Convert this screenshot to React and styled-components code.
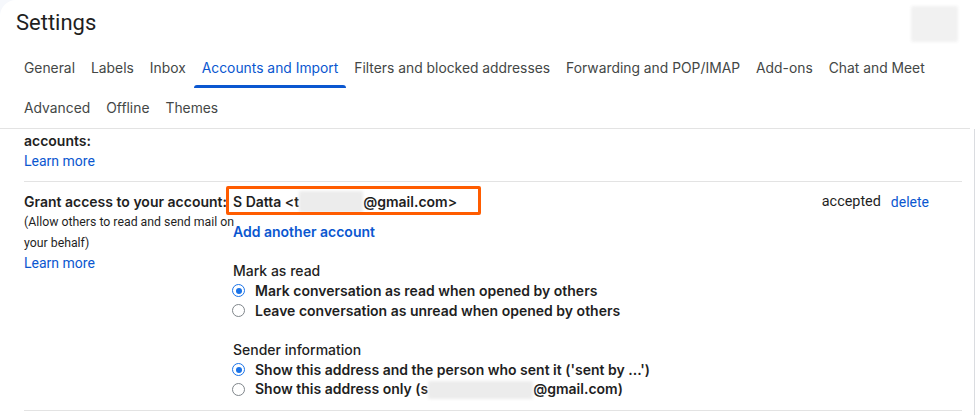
import React from "react";
import styled, { createGlobalStyle } from "styled-components";

const Global = createGlobalStyle`
  html, body { margin: 0; padding: 0; background: #f6f8fc; }
  body { font-family: Roboto, "Noto Sans", Arial, sans-serif; color: #1f1f1f; }
  * { box-sizing: border-box; }
`;

const Card = styled.div`
  width: 975px;
  height: 415px;
  background: #fff;
  border-top-left-radius: 16px;
  overflow: hidden;
  display: flex;
  flex-direction: column;
`;

const Header = styled.div`
  height: 48px;
  display: flex;
  align-items: center;
  justify-content: space-between;
  padding: 0 17px 0 16px;
`;

const Title = styled.h1`
  margin: 0;
  font-size: 22px;
  font-weight: 400;
  color: #1f1f1f;
  line-height: 28px;
  padding-bottom: 2px;
`;

const Blur = styled.span`
  display: inline-block;
  width: ${(p) => p.w}px;
  height: ${(p) => p.h}px;
  background: ${(p) => p.bg || "#ececec"};
  filter: blur(1.5px);
  vertical-align: middle;
  border-radius: 2px;
`;

const TabsArea = styled.nav`
  padding-left: 16px;
  border-bottom: 1px solid #e3e3e3;
  margin-right: 5px;
`;

const TabRow = styled.div`
  display: flex;
  height: 40px;
`;

const Tab = styled.a`
  position: relative;
  display: flex;
  align-items: center;
  padding: 0 8px 1px;
  font-family: Inter, Roboto, sans-serif;
  font-size: 13.85px;
  color: ${(p) => (p.active ? "#0b57d0" : "#444746")};
  white-space: nowrap;
  cursor: pointer;
  &::after {
    content: "";
    display: ${(p) => (p.active ? "block" : "none")};
    position: absolute;
    left: 0;
    right: 0;
    bottom: 0;
    height: 3px;
    background: #0b57d0;
    border-radius: 3px 3px 0 0;
  }
`;

const Scroll = styled.div`
  flex: 1;
  border-right: 1px solid #dadce0;
  padding: 2px 12px 0 24px;
`;

const Section = styled.div`
  display: grid;
  grid-template-columns: 209px 1fr;
  padding: ${(p) => (p.first ? "0" : "10px")} 0 10px;
  border-bottom: 1px solid #e3e3e3;
`;

const LabelCol = styled.div`
  display: flex;
  flex-direction: column;
  white-space: nowrap;
`;

const Bold = styled.div`
  font-family: Inter, Roboto, sans-serif;
  font-size: 14px;
  font-weight: 600;
  line-height: 20px;
  color: #1f1f1f;
`;

const Sub = styled.div`
  font-size: 12.3px;
  line-height: 20.5px;
  color: #1f1f1f;
`;

const Link = styled.a`
  font-family: ${(p) => (p.bold ? "Inter, Roboto, sans-serif" : "Roboto, sans-serif")};
  font-size: 14px;
  line-height: 20px;
  color: #0b57d0;
  font-weight: ${(p) => (p.bold ? 600 : 400)};
  cursor: pointer;
`;

const ValueCol = styled.div`
  display: flex;
  flex-direction: column;
`;

const AccountRow = styled.div`
  display: flex;
  align-items: center;
  height: 20px;
`;

const AccountName = styled.div`
  position: relative;
  font-family: Inter, Roboto, sans-serif;
  font-size: 14px;
  font-weight: 600;
  line-height: 20px;
  white-space: nowrap;
  display: flex;
  align-items: center;
`;

const Highlight = styled.span`
  position: absolute;
  left: -7px;
  top: -5px;
  width: 255px;
  height: 29px;
  border: 3px solid #ff5c00;
  border-radius: 2px;
  pointer-events: none;
`;

const Status = styled.div`
  margin-left: auto;
  margin-right: 33px;
  display: flex;
  gap: 10px;
  font-size: 14.4px;
  line-height: 20px;
`;

const Group = styled.div`
  margin-top: ${(p) => p.mt}px;
  display: flex;
  flex-direction: column;
`;

const GroupTitle = styled.div`
  font-family: Inter, Roboto, sans-serif;
  font-size: 14px;
  font-weight: 500;
  line-height: 20px;
  color: #1f1f1f;
`;

const Option = styled.label`
  display: flex;
  align-items: center;
  gap: 10px;
  height: 20px;
  padding-bottom: 1px;
  font-family: Inter, Roboto, sans-serif;
  font-size: 14px;
  font-weight: 600;
  color: #1f1f1f;
  white-space: nowrap;
`;

const Radio = styled.span`
  width: 13px;
  height: 13px;
  border-radius: 50%;
  border: 1.5px solid ${(p) => (p.checked ? "#1a73e8" : "#80868b")};
  display: flex;
  align-items: center;
  justify-content: center;
  margin-left: -1px;
  &::after {
    content: "";
    display: ${(p) => (p.checked ? "block" : "none")};
    width: 6px;
    height: 6px;
    border-radius: 50%;
    background: #1a73e8;
  }
`;

const tabs1 = [
  "General",
  "Labels",
  "Inbox",
  "Accounts and Import",
  "Filters and blocked addresses",
  "Forwarding and POP/IMAP",
  "Add-ons",
  "Chat and Meet",
];
const tabs2 = ["Advanced", "Offline", "Themes"];

export default function App() {
  return (
    <>
      <Global />
      <Card>
        <Header>
          <Title>Settings</Title>
          <Blur w={47} h={36} bg="#f1f1f1" />
        </Header>
        <TabsArea>
          <TabRow>
            {tabs1.map((t) => (
              <Tab key={t} active={t === "Accounts and Import"}>
                {t}
              </Tab>
            ))}
          </TabRow>
          <TabRow>
            {tabs2.map((t) => (
              <Tab key={t}>{t}</Tab>
            ))}
          </TabRow>
        </TabsArea>
        <Scroll>
          <Section first>
            <LabelCol>
              <Bold>accounts:</Bold>
              <Link>Learn more</Link>
            </LabelCol>
            <div />
          </Section>
          <Section>
            <LabelCol>
              <Bold>Grant access to your account:</Bold>
              <Sub>(Allow others to read and send mail on</Sub>
              <Sub>your behalf)</Sub>
              <Link>Learn more</Link>
            </LabelCol>
            <ValueCol>
              <AccountRow>
                <AccountName>
                  S Datta &lt;t
                  <Blur w={64} h={22} />
                  @gmail.com&gt;
                  <Highlight />
                </AccountName>
                <Status>
                  <span>accepted</span>
                  <Link>delete</Link>
                </Status>
              </AccountRow>
              <Group mt={10}>
                <Link bold>Add another account</Link>
              </Group>
              <Group mt={19}>
                <GroupTitle>Mark as read</GroupTitle>
                <Option>
                  <Radio checked />
                  Mark conversation as read when opened by others
                </Option>
                <Option>
                  <Radio />
                  Leave conversation as unread when opened by others
                </Option>
              </Group>
              <Group mt={19}>
                <GroupTitle>Sender information</GroupTitle>
                <Option>
                  <Radio checked />
                  Show this address and the person who sent it ('sent by ...')
                </Option>
                <Option>
                  <Radio />
                  <span>
                    Show this address only (s
                    <Blur w={105} h={18} />
                    @gmail.com)
                  </span>
                </Option>
              </Group>
            </ValueCol>
          </Section>
        </Scroll>
      </Card>
    </>
  );
}
